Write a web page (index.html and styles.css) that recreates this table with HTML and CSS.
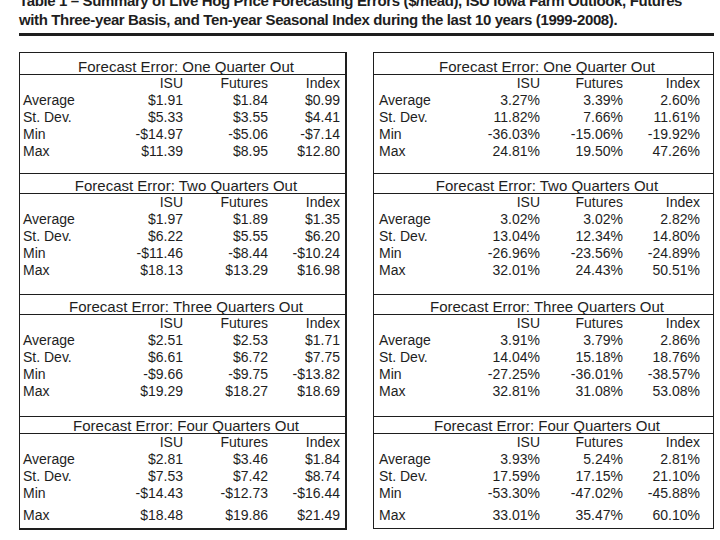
FILE: index.html
```html
<!DOCTYPE html>
<html>
<head>
<meta charset="utf-8">
<link rel="stylesheet" href="styles.css">
</head>
<body>
<div class="page">
  <div class="title">Table 1 – Summary of Live Hog Price Forecasting Errors ($/head), ISU Iowa Farm Outlook, Futures<br>with Three-year Basis, and Ten-year Seasonal Index during the last 10 years (1999-2008).</div>
  <div class="rule"></div>
  <div class="panels">
    <div class="box box-left">
      <div class="sec sec1">
        <div class="sec-head">Forecast Error: One Quarter Out</div>
        <div class="row"><span></span><span>ISU</span><span>Futures</span><span>Index</span></div>
        <div class="row"><span>Average</span><span>$1.91</span><span>$1.84</span><span>$0.99</span></div>
        <div class="row"><span>St. Dev.</span><span>$5.33</span><span>$3.55</span><span>$4.41</span></div>
        <div class="row"><span>Min</span><span>-$14.97</span><span>-$5.06</span><span>-$7.14</span></div>
        <div class="row"><span>Max</span><span>$11.39</span><span>$8.95</span><span>$12.80</span></div>
      </div>
      <div class="sec sec2">
        <div class="sec-head">Forecast Error: Two Quarters Out</div>
        <div class="row"><span></span><span>ISU</span><span>Futures</span><span>Index</span></div>
        <div class="row"><span>Average</span><span>$1.97</span><span>$1.89</span><span>$1.35</span></div>
        <div class="row"><span>St. Dev.</span><span>$6.22</span><span>$5.55</span><span>$6.20</span></div>
        <div class="row"><span>Min</span><span>-$11.46</span><span>-$8.44</span><span>-$10.24</span></div>
        <div class="row"><span>Max</span><span>$18.13</span><span>$13.29</span><span>$16.98</span></div>
      </div>
      <div class="sec sec3">
        <div class="sec-head">Forecast Error: Three Quarters Out</div>
        <div class="row"><span></span><span>ISU</span><span>Futures</span><span>Index</span></div>
        <div class="row"><span>Average</span><span>$2.51</span><span>$2.53</span><span>$1.71</span></div>
        <div class="row"><span>St. Dev.</span><span>$6.61</span><span>$6.72</span><span>$7.75</span></div>
        <div class="row"><span>Min</span><span>-$9.66</span><span>-$9.75</span><span>-$13.82</span></div>
        <div class="row"><span>Max</span><span>$19.29</span><span>$18.27</span><span>$18.69</span></div>
      </div>
      <div class="sec sec4">
        <div class="sec-head">Forecast Error: Four Quarters Out</div>
        <div class="row"><span></span><span>ISU</span><span>Futures</span><span>Index</span></div>
        <div class="row"><span>Average</span><span>$2.81</span><span>$3.46</span><span>$1.84</span></div>
        <div class="row"><span>St. Dev.</span><span>$7.53</span><span>$7.42</span><span>$8.74</span></div>
        <div class="row"><span>Min</span><span>-$14.43</span><span>-$12.73</span><span>-$16.44</span></div>
        <div class="row row-last"><span>Max</span><span>$18.48</span><span>$19.86</span><span>$21.49</span></div>
      </div>
    </div>
    <div class="box box-right">
      <div class="sec sec1">
        <div class="sec-head">Forecast Error: One Quarter Out</div>
        <div class="row"><span></span><span>ISU</span><span>Futures</span><span>Index</span></div>
        <div class="row"><span>Average</span><span>3.27%</span><span>3.39%</span><span>2.60%</span></div>
        <div class="row"><span>St. Dev.</span><span>11.82%</span><span>7.66%</span><span>11.61%</span></div>
        <div class="row"><span>Min</span><span>-36.03%</span><span>-15.06%</span><span>-19.92%</span></div>
        <div class="row"><span>Max</span><span>24.81%</span><span>19.50%</span><span>47.26%</span></div>
      </div>
      <div class="sec sec2">
        <div class="sec-head">Forecast Error: Two Quarters Out</div>
        <div class="row"><span></span><span>ISU</span><span>Futures</span><span>Index</span></div>
        <div class="row"><span>Average</span><span>3.02%</span><span>3.02%</span><span>2.82%</span></div>
        <div class="row"><span>St. Dev.</span><span>13.04%</span><span>12.34%</span><span>14.80%</span></div>
        <div class="row"><span>Min</span><span>-26.96%</span><span>-23.56%</span><span>-24.89%</span></div>
        <div class="row"><span>Max</span><span>32.01%</span><span>24.43%</span><span>50.51%</span></div>
      </div>
      <div class="sec sec3">
        <div class="sec-head">Forecast Error: Three Quarters Out</div>
        <div class="row"><span></span><span>ISU</span><span>Futures</span><span>Index</span></div>
        <div class="row"><span>Average</span><span>3.91%</span><span>3.79%</span><span>2.86%</span></div>
        <div class="row"><span>St. Dev.</span><span>14.04%</span><span>15.18%</span><span>18.76%</span></div>
        <div class="row"><span>Min</span><span>-27.25%</span><span>-36.01%</span><span>-38.57%</span></div>
        <div class="row"><span>Max</span><span>32.81%</span><span>31.08%</span><span>53.08%</span></div>
      </div>
      <div class="sec sec4">
        <div class="sec-head">Forecast Error: Four Quarters Out</div>
        <div class="row"><span></span><span>ISU</span><span>Futures</span><span>Index</span></div>
        <div class="row"><span>Average</span><span>3.93%</span><span>5.24%</span><span>2.81%</span></div>
        <div class="row"><span>St. Dev.</span><span>17.59%</span><span>17.15%</span><span>21.10%</span></div>
        <div class="row"><span>Min</span><span>-53.30%</span><span>-47.02%</span><span>-45.88%</span></div>
        <div class="row row-last"><span>Max</span><span>33.01%</span><span>35.47%</span><span>60.10%</span></div>
      </div>
    </div>
  </div>
</div>
</body>
</html>
```
FILE: styles.css
```css
html, body {
  margin: 0;
  padding: 0;
  background: #ffffff;
}
body {
  font-family: "Liberation Sans", Arial, sans-serif;
  color: #1e1e1e;
  overflow: hidden;
}
.page {
  width: 695px;
  padding-left: 19px;
}
.title {
  margin-top: -9px;
  font-size: 15px;
  line-height: 19px;
  font-weight: bold;
  white-space: nowrap;
  letter-spacing: -0.37px;
}
.rule {
  margin-top: 4px;
  height: 3px;
  background: #1e1e1e;
}
.panels {
  display: flex;
  align-items: flex-start;
  gap: 26px;
  margin-top: 16px;
}
.box {
  border: 1px solid #1e1e1e;
  background: #fff;
}
.box-left {
  width: 325px;
  border-right-width: 2px;
  border-bottom-width: 2px;
  --cols: 90px 70px 85px 72px;
  --pl: 3px;
  --pr: 5px;
}
.box-right {
  width: 339px;
  --cols: 91px 70px 83px 77px;
  --pl: 5px;
  --pr: 13px;
}
.sec {
  border-top: 1px solid #1e1e1e;
  padding-bottom: 15px;
}
.sec1 {
  border-top: none;
  padding-bottom: 13px;
}
.sec3 {
  padding-bottom: 16px;
}
.sec4 {
  padding-bottom: 4px;
}
.sec-head {
  padding: 4px 0 0 7px;
  line-height: 15px;
  font-size: 15px;
  text-align: center;
  border-bottom: 1px solid #1e1e1e;
}
.sec1 .sec-head {
  padding-top: 6px;
}
.sec4 .sec-head {
  padding-top: 1px;
}
.row {
  display: grid;
  grid-template-columns: var(--cols);
  padding: 0 var(--pr) 0 var(--pl);
  font-size: 14px;
  line-height: 17px;
  height: 17px;
}
.row span {
  text-align: right;
  white-space: nowrap;
}
.row span:first-child {
  text-align: left;
}
.row-last {
  margin-top: 5px;
}
```
